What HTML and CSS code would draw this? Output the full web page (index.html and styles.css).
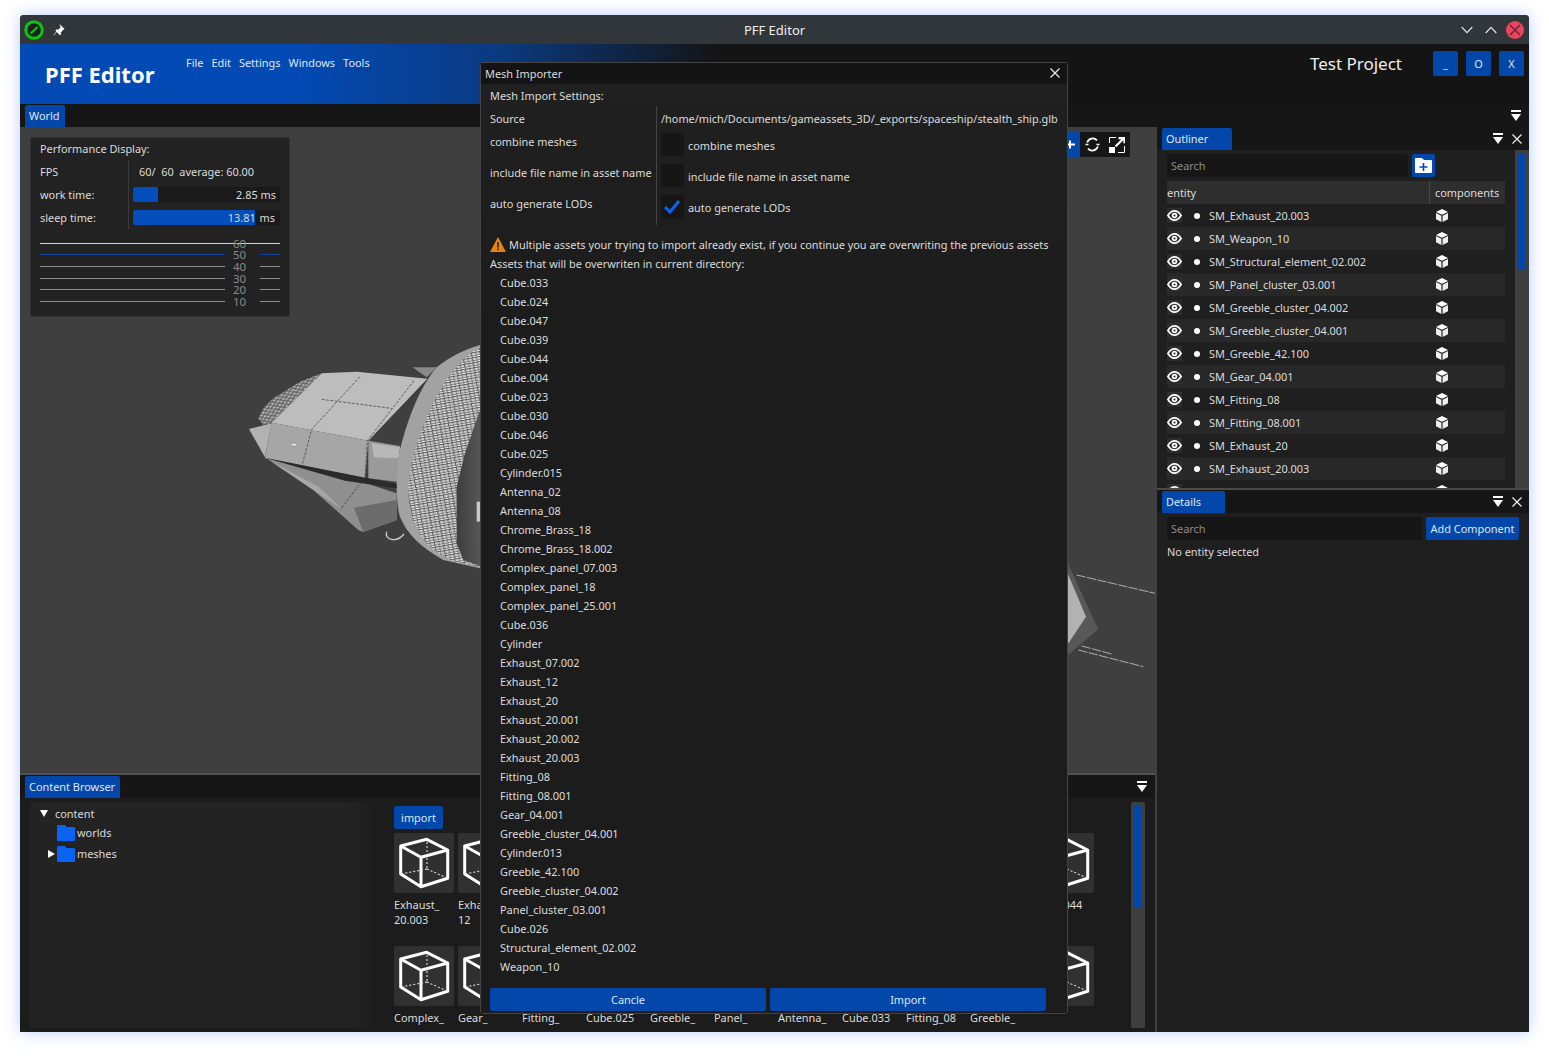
FILE: index.html
```html
<!DOCTYPE html>
<html lang="en">
<head>
<meta charset="utf-8">
<title>PFF Editor</title>
<link rel="stylesheet" href="styles.css">
</head>
<body>
<svg class="sprite" width="0" height="0">
  <symbol id="menu-ico" viewBox="0 0 12 12"><rect x="1" y="0" width="10" height="2" fill="#fff"/><path d="M1 4h10l-5 7z" fill="#fff"/></symbol>
  <symbol id="x-ico" viewBox="0 0 12 12"><path d="M1.500 1.500l9 9M10.500 1.500l-9 9" stroke="#eee" stroke-width="1.200" fill="none"/></symbol>
  <symbol id="eye" viewBox="0 0 16 12"><path d="M.8 6C3 2.600 5.400 1 8 1s5 1.600 7.200 5C13 9.400 10.600 11 8 11S3 9.400.8 6z" fill="none" stroke="#fff" stroke-width="1.800"/><circle cx="8" cy="6" r="3" fill="#fff"/><circle cx="8" cy="6" r="1.100" fill="#222"/></symbol>
  <symbol id="box" viewBox="0 0 12 13"><path d="M6 0l6 2.900-6 2.900-6-2.900z" fill="#fff"/><path d="M0 4l5.400 2.700V13L0 10.200zM12 4L6.600 6.700V13L12 10.200z" fill="#eee"/></symbol>
  <symbol id="folder" viewBox="0 0 18 16"><path d="M0 1a1 1 0 0 1 1-1h7l2 2h7a1 1 0 0 1 1 1v12a1 1 0 0 1-1 1H1a1 1 0 0 1-1-1z" fill="#0a63f2"/><path d="M9 1.200h9" stroke="#1c1c1c" stroke-width=".7"/></symbol>
  <symbol id="cube" viewBox="0 0 60 60">
    <path d="M32.700 6.300L53.700 17 27 24.300 6.700 13zM6.700 13V41L27 53.700 53.700 45.300V17M27 24.300V53.700" fill="none" stroke="#fff" stroke-width="3" stroke-linejoin="round"/>
    <path d="M33 9V36M33 36L6.700 41M33 36L53.700 45.300" fill="none" stroke="#ddd" stroke-width="1.100" stroke-dasharray="2 2"/>
  </symbol>
</svg>

<div class="window">
  <div class="titlebar">
    <div class="tb-left">
      <svg class="tb-logo" viewBox="0 0 20 20"><circle cx="10" cy="10" r="8.300" fill="#1b1f22" stroke="#0cc40c" stroke-width="3"/><path d="M6.500 13.500L13.500 7" stroke="#0cc40c" stroke-width="2.200"/></svg>
      <svg class="tb-pin" viewBox="0 0 12 12"><path d="M7 .8l4.200 4.200-1.200.6-2.400 2.800.2 1.800-1 .6-4-4 .6-1 1.800.2 2.800-2.400zM3.800 7.400L.8 11.200" fill="#fff" stroke="#fff" stroke-width=".7"/></svg>
    </div>
    <div class="tb-title">PFF Editor</div>
    <div class="tb-right">
      <svg class="tb-chev" viewBox="0 0 12 8"><path d="M.7 1L6 6.600 11.300 1" fill="none" stroke="#e8e8e8" stroke-width="1.100"/></svg>
      <svg class="tb-chev" viewBox="0 0 12 8"><path d="M.7 7L6 1.400 11.300 7" fill="none" stroke="#e8e8e8" stroke-width="1.100"/></svg>
      <svg class="tb-close" viewBox="0 0 18 18"><circle cx="9" cy="9" r="9" fill="#e9445d"/><path d="M4 4l10 10M14 4L4 14" stroke="#5a2530" stroke-width="1.200"/></svg>
    </div>
  </div>

  <header class="appbar">
    <div class="brand">PFF Editor</div>
    <nav class="menu"><span>File</span><span>Edit</span><span>Settings</span><span>Windows</span><span>Tools</span></nav>
    <div class="project">Test Project</div>
    <div class="app-btns"><button class="app-btn">_</button><button class="app-btn">O</button><button class="app-btn">X</button></div>
  </header>

  <div class="tabrow world-row">
    <div class="tab">World</div>
    <svg class="ico12 push"><use href="#menu-ico"/></svg>
  </div>

  <div class="main">
    <div class="leftcol">
      <section class="viewport">
        <svg class="scene" viewBox="20 127 1135 646">
          <defs>
            <pattern id="dots" width="26" height="15" patternUnits="userSpaceOnUse" patternTransform="rotate(-10)">
              <rect width="26" height="15" fill="#5a5a5a"/>
              <path d="M0 3h11M13 3h10M2 10h9M13 10h12" stroke="#f4f4f4" stroke-width="4"/>
            </pattern>
            <pattern id="grb" width="18" height="12" patternUnits="userSpaceOnUse" patternTransform="rotate(-25)">
              <rect width="18" height="12" fill="#6a6a6a"/>
              <path d="M0 3h8M10 8h6" stroke="#f0f0f0" stroke-width="3"/>
            </pattern>
            <linearGradient id="inner" x1="0" x2="1" y1="0" y2="0"><stop offset="0" stop-color="#3e3e3e"/><stop offset="1" stop-color="#565656"/></linearGradient>
          </defs>
          <g transform="translate(230 330) scale(.33333)">
            <path d="M620 112C570 170 530 270 505 380 495 450 500 530 510 560 530 610 570 650 640 690L750 715V45C700 60 660 80 620 112z" fill="#a2a2a2"/>
            <path d="M750 52C690 85 640 150 600 240 560 330 535 420 535 480 535 570 570 640 640 680 670 695 700 703 750 708z" fill="url(#dots)"/>
            <path d="M750 240L705 370 680 470 680 640 700 690 750 708z" fill="url(#inner)"/>
            <rect x="740" y="515" width="10" height="60" fill="#c8c8c8"/>
            <path d="M85 265L100 235 130 205 210 155 275 130 125 278 100 285z" fill="url(#grb)"/>
            <path d="M548 112H620L590 142z" fill="#8a8a8a"/>
            <path d="M275 130L380 125 592 146 415 332 125 278z" fill="#bdbdbd"/>
            <path d="M125 278L415 332 405 445 105 385z" fill="#a6a6a6"/>
            <path d="M57 297L125 280 105 382z" fill="#b2b2b2"/>
            <path d="M415 332L510 348 500 455 415 445z" fill="#9a9a9a"/>
            <path d="M425 340L510 352 505 385 432 382z" fill="#b8b8b8"/>
            <path d="M110 385L250 480 385 600 400 606 500 570 500 490 395 455z" fill="#8f8f8f"/>
            <path d="M120 392L265 470 340 540 250 480z" fill="#a8a8a8"/>
            <path d="M372 533L500 510 500 570 400 606z" fill="#6c6c6c"/>
            <path d="M105 383L500 462 500 475 345 452z" fill="#2b2b2b"/>
            <path d="M275 208L485 235M390 140L245 298 215 410M552 152L412 332 405 445M395 455L330 540" fill="none" stroke="#333" stroke-width="2" stroke-dasharray="9 4"/>
            <ellipse cx="192" cy="344" rx="10" ry="5" fill="#dadada" stroke="#555"/>
            <path d="M470 605C462 630 500 640 522 612" fill="none" stroke="#ccc" stroke-width="4"/>
          </g>
          <g transform="translate(1060 550) scale(.33333)">
            <path d="M20 32L115 238 20 318z" fill="#585858"/>
            <path d="M20 62L78 200 20 288z" fill="#b2b2b2"/>
            <path d="M50 75L285 130M65 288L155 312M55 300L250 350" stroke="#c4c4c4" stroke-width="2.500" stroke-dasharray="28 4"/>
          </g>
        </svg>

        <div class="perf">
          <div class="perf-title">Performance Display:</div>
          <div class="perf-table">
            <div class="perf-labels"><div>FPS</div><div>work time:</div><div>sleep time:</div></div>
            <div class="perf-values">
              <div class="fps">60/  60  average: 60.00</div>
              <div class="bar"><div class="bar-fill" style="width:25px"></div><span class="bar-text">2.85 ms</span></div>
              <div class="bar"><div class="bar-fill" style="width:122px"></div><span class="bar-text alt">13.81 ms</span></div>
            </div>
          </div>
          <div class="graph">
            <div class="gline top"><i></i><b>60</b><i></i></div>
            <div class="gline blue"><i></i><b>50</b><i></i></div>
            <div class="gline"><i></i><b>40</b><i></i></div>
            <div class="gline"><i></i><b>30</b><i></i></div>
            <div class="gline"><i></i><b>20</b><i></i></div>
            <div class="gline"><i></i><b>10</b><i></i></div>
          </div>
        </div>

        <div class="gizmo">
          <div class="giz-blue"><svg width="8" height="11" viewBox="0 0 8 11"><path d="M0 5.500h8M3 1.500v8" stroke="#fff" stroke-width="2"/></svg></div>
          <svg class="giz-ico" viewBox="0 0 15 15"><path d="M2.200 5.500A5.800 5.800 0 0 1 12 3.300M12.800 9.500A5.800 5.800 0 0 1 3 11.700" fill="none" stroke="#fff" stroke-width="1.700"/><path d="M.5 7.500h3M11.500 7.500h3" stroke="#fff" stroke-width="1.700"/></svg>
          <svg class="giz-ico wide" viewBox="0 0 16 16"><path d="M.5 6V.5H7M15.500 9v6.500H9" fill="none" stroke="#fff" stroke-width="1"/><rect x="0" y="10" width="6" height="6" fill="#fff"/><path d="M6.500 9.500L14 2M9.500 1.200h6v5" fill="none" stroke="#fff" stroke-width="2.200"/></svg>
        </div>
      </section>

      <div class="hsplit"></div>

      <section class="browser">
        <div class="tabrow browser-tabs">
          <div class="tab">Content Browser</div>
          <svg class="ico12 push"><use href="#menu-ico"/></svg>
        </div>
        <div class="browser-body">
          <div class="tree">
            <div class="tree-row root"><span class="tri-down"></span><span>content</span></div>
            <div class="tree-row folder-row"><svg class="folder"><use href="#folder"/></svg><span>worlds</span></div>
            <div class="tree-row folder-row"><span class="tri-right"></span><svg class="folder"><use href="#folder"/></svg><span>meshes</span></div>
          </div>
          <div class="assets">
            <button class="btn import-btn">import</button>
            <div class="asset-grid">
              <div class="asset"><svg class="thumb"><use href="#cube"/></svg><div>Exhaust_<br>20.003</div></div>
              <div class="asset"><svg class="thumb"><use href="#cube"/></svg><div>Exhaust_<br>12</div></div>
              <div class="asset"><svg class="thumb"><use href="#cube"/></svg><div>Exhaust_<br>20</div></div>
              <div class="asset"><svg class="thumb"><use href="#cube"/></svg><div>Cube.030</div></div>
              <div class="asset"><svg class="thumb"><use href="#cube"/></svg><div>Cube.004</div></div>
              <div class="asset"><svg class="thumb"><use href="#cube"/></svg><div>Cube.023</div></div>
              <div class="asset"><svg class="thumb"><use href="#cube"/></svg><div>Cube.046</div></div>
              <div class="asset"><svg class="thumb"><use href="#cube"/></svg><div>Cube.025</div></div>
              <div class="asset"><svg class="thumb"><use href="#cube"/></svg><div>Cube.036</div></div>
              <div class="asset"><svg class="thumb"><use href="#cube"/></svg><div>Cube.039</div></div>
              <div class="asset"><svg class="thumb"><use href="#cube"/></svg><div>Cube.044</div></div>
              <div class="asset"><svg class="thumb"><use href="#cube"/></svg><div>Complex_</div></div>
              <div class="asset"><svg class="thumb"><use href="#cube"/></svg><div>Gear_</div></div>
              <div class="asset"><svg class="thumb"><use href="#cube"/></svg><div>Fitting_</div></div>
              <div class="asset"><svg class="thumb"><use href="#cube"/></svg><div>Cube.025</div></div>
              <div class="asset"><svg class="thumb"><use href="#cube"/></svg><div>Greeble_</div></div>
              <div class="asset"><svg class="thumb"><use href="#cube"/></svg><div>Panel_</div></div>
              <div class="asset"><svg class="thumb"><use href="#cube"/></svg><div>Antenna_</div></div>
              <div class="asset"><svg class="thumb"><use href="#cube"/></svg><div>Cube.033</div></div>
              <div class="asset"><svg class="thumb"><use href="#cube"/></svg><div>Fitting_08</div></div>
              <div class="asset"><svg class="thumb"><use href="#cube"/></svg><div>Greeble_</div></div>
              <div class="asset"><svg class="thumb"><use href="#cube"/></svg><div></div></div>
            </div>
          </div>
          <div class="vscroll"><div class="vthumb"></div></div>
        </div>
      </section>
    </div>

    <div class="vsplit"></div>

    <div class="rightcol">
      <section class="outliner">
        <div class="tabrow side-tabs">
          <div class="tab outliner-tab">Outliner</div>
          <svg class="ico12 push"><use href="#menu-ico"/></svg>
          <svg class="ico12"><use href="#x-ico"/></svg>
        </div>
        <div class="outliner-body">
          <div class="outliner-main">
            <div class="search-row">
              <div class="search grow">Search</div>
              <button class="btn add-folder"><svg width="17" height="15" viewBox="0 0 17 15"><path d="M0 1a1 1 0 0 1 1-1h6l2 2h7a1 1 0 0 1 1 1v11a1 1 0 0 1-1 1H1a1 1 0 0 1-1-1z" fill="#fff"/><path d="M8.500 5v8M4.500 9h8" stroke="#0347ab" stroke-width="1.600"/></svg></button>
            </div>
            <div class="ent-head"><div class="col-a">entity</div><div class="col-b">components</div></div>
            <div class="ent-row"><svg class="eye"><use href="#eye"/></svg><i class="dot"></i><span class="ent-name">SM_Exhaust_20.003</span><svg class="box"><use href="#box"/></svg></div>
            <div class="ent-row"><svg class="eye"><use href="#eye"/></svg><i class="dot"></i><span class="ent-name">SM_Weapon_10</span><svg class="box"><use href="#box"/></svg></div>
            <div class="ent-row"><svg class="eye"><use href="#eye"/></svg><i class="dot"></i><span class="ent-name">SM_Structural_element_02.002</span><svg class="box"><use href="#box"/></svg></div>
            <div class="ent-row"><svg class="eye"><use href="#eye"/></svg><i class="dot"></i><span class="ent-name">SM_Panel_cluster_03.001</span><svg class="box"><use href="#box"/></svg></div>
            <div class="ent-row"><svg class="eye"><use href="#eye"/></svg><i class="dot"></i><span class="ent-name">SM_Greeble_cluster_04.002</span><svg class="box"><use href="#box"/></svg></div>
            <div class="ent-row"><svg class="eye"><use href="#eye"/></svg><i class="dot"></i><span class="ent-name">SM_Greeble_cluster_04.001</span><svg class="box"><use href="#box"/></svg></div>
            <div class="ent-row"><svg class="eye"><use href="#eye"/></svg><i class="dot"></i><span class="ent-name">SM_Greeble_42.100</span><svg class="box"><use href="#box"/></svg></div>
            <div class="ent-row"><svg class="eye"><use href="#eye"/></svg><i class="dot"></i><span class="ent-name">SM_Gear_04.001</span><svg class="box"><use href="#box"/></svg></div>
            <div class="ent-row"><svg class="eye"><use href="#eye"/></svg><i class="dot"></i><span class="ent-name">SM_Fitting_08</span><svg class="box"><use href="#box"/></svg></div>
            <div class="ent-row"><svg class="eye"><use href="#eye"/></svg><i class="dot"></i><span class="ent-name">SM_Fitting_08.001</span><svg class="box"><use href="#box"/></svg></div>
            <div class="ent-row"><svg class="eye"><use href="#eye"/></svg><i class="dot"></i><span class="ent-name">SM_Exhaust_20</span><svg class="box"><use href="#box"/></svg></div>
            <div class="ent-row"><svg class="eye"><use href="#eye"/></svg><i class="dot"></i><span class="ent-name">SM_Exhaust_20.003</span><svg class="box"><use href="#box"/></svg></div>
            <div class="ent-row last-row"><svg class="eye"><use href="#eye"/></svg><i class="dot"></i><svg class="box"><use href="#box"/></svg></div>
          </div>
          <div class="side-scroll"><div class="side-thumb"></div></div>
        </div>
      </section>

      <div class="hsplit right"></div>

      <section class="details">
        <div class="tabrow side-tabs">
          <div class="tab details-tab">Details</div>
          <svg class="ico12 push"><use href="#menu-ico"/></svg>
          <svg class="ico12"><use href="#x-ico"/></svg>
        </div>
        <div class="details-body">
          <div class="search-row">
            <div class="search grow">Search</div>
            <button class="btn add-comp">Add Component</button>
          </div>
          <div class="no-sel">No entity selected</div>
        </div>
      </section>
    </div>
  </div>

  <div class="dialog">
    <div class="dlg-title"><span>Mesh Importer</span><svg class="ico12 dlg-x"><use href="#x-ico"/></svg></div>
    <div class="dlg-body">
      <div class="dlg-line">Mesh Import Settings:</div>
      <div class="settings">
        <div class="s-label src">Source</div>
        <div class="s-value src">/home/mich/Documents/gameassets_3D/_exports/spaceship/stealth_ship.glb</div>
        <div class="s-label">combine meshes</div>
        <div class="s-value"><span class="check"></span>combine meshes</div>
        <div class="s-label">include file name in asset name</div>
        <div class="s-value"><span class="check"></span>include file name in asset name</div>
        <div class="s-label">auto generate LODs</div>
        <div class="s-value"><span class="check"><svg width="23" height="23" viewBox="0 0 23 23"><path d="M4 12l5 5 9-11" fill="none" stroke="#0a63f2" stroke-width="3"/></svg></span>auto generate LODs</div>
      </div>
      <div class="dlg-line warn"><svg class="warn-ico" viewBox="0 0 16 15"><path d="M8 0l8 15H0z" fill="#e8830c"/><path d="M8 5v5.500M8 11.600v1.600" stroke="#1a1a1a" stroke-width="1.500"/></svg>Multiple assets your trying to import already exist, if you continue you are overwriting the previous assets</div>
      <div class="dlg-line">Assets that will be overwriten in current directory:</div>
      <ul class="asset-list">
        <li>Cube.033</li><li>Cube.024</li><li>Cube.047</li><li>Cube.039</li><li>Cube.044</li><li>Cube.004</li><li>Cube.023</li><li>Cube.030</li><li>Cube.046</li><li>Cube.025</li>
        <li>Cylinder.015</li><li>Antenna_02</li><li>Antenna_08</li><li>Chrome_Brass_18</li><li>Chrome_Brass_18.002</li><li>Complex_panel_07.003</li><li>Complex_panel_18</li><li>Complex_panel_25.001</li><li>Cube.036</li><li>Cylinder</li>
        <li>Exhaust_07.002</li><li>Exhaust_12</li><li>Exhaust_20</li><li>Exhaust_20.001</li><li>Exhaust_20.002</li><li>Exhaust_20.003</li><li>Fitting_08</li><li>Fitting_08.001</li><li>Gear_04.001</li><li>Greeble_cluster_04.001</li>
        <li>Cylinder.013</li><li>Greeble_42.100</li><li>Greeble_cluster_04.002</li><li>Panel_cluster_03.001</li><li>Cube.026</li><li>Structural_element_02.002</li><li>Weapon_10</li>
      </ul>
      <div class="dlg-actions"><button class="btn dlg-btn">Cancle</button><button class="btn dlg-btn">Import</button></div>
    </div>
  </div>
</div>
</body>
</html>
```

FILE: styles.css
```css
* { box-sizing: border-box; }
html, body { margin: 0; padding: 0; height: 100%; overflow: hidden; }
body { background: #fff; font-family: "Noto Sans", sans-serif; font-size: 10.920px; color: #dcdcdc; }
.sprite { position: absolute; }
button { font: inherit; border: 0; padding: 0; color: #dfe6f2; }

.window { position: relative; margin: 15px 0 0 20px; width: 1509px; height: 1017px; display: flex; flex-direction: column; background: #161616; border-radius: 4px 4px 0 0; box-shadow: 0 0 16px rgba(70,130,255,.38); overflow: hidden; }

.titlebar { height: 29px; flex: none; display: grid; grid-template-columns: 1fr auto 1fr; align-items: center; background: #31363b; font-size: 13px; color: #eff0f1; }
.tb-left { display: flex; align-items: center; padding-left: 4px; gap: 9px; }
.tb-logo { width: 20px; height: 20px; }
.tb-pin { width: 12px; height: 12px; }
.tb-right { display: flex; align-items: center; justify-content: flex-end; gap: 12px; padding-right: 5px; }
.tb-chev { width: 12px; height: 8px; }
.tb-close { width: 18px; height: 18px; margin-left: -3px; }

.appbar { height: 60px; flex: none; display: flex; background: linear-gradient(90deg, #034ab5 0, #034ab5 270px, #0a3a80 480px, #141414 700px); }
.brand { font-size: 22px; font-weight: 700; color: #fff; padding: 14px 0 0 25px; width: 166px; line-height: 32px; }
.menu { display: flex; gap: 8px; padding-top: 10px; line-height: 18px; color: #dfe8f7; }
.project { margin-left: auto; font-size: 17px; line-height: 24px; padding-top: 8px; color: #eee; }
.app-btns { display: flex; gap: 8px; margin: 7px 5px 0 31px; }
.app-btn { width: 25px; height: 25px; background: #0347ab; border-radius: 2px; }

.tabrow { height: 23px; flex: none; display: flex; align-items: flex-end; background: #161616; }
.world-row { padding-left: 5px; padding-right: 7px; }
.tab { height: 22px; line-height: 22px; padding: 0 5px 0 4px; background: #0347ab; border-radius: 2px 2px 0 0; color: #dfe8f7; }
.ico12 { width: 12px; height: 12px; margin-bottom: 5px; flex: none; }
.push { margin-left: auto; }

.main { flex: 1; min-height: 0; display: flex; }
.leftcol { width: 1135px; flex: none; display: flex; flex-direction: column; }
.vsplit { width: 2px; background: #3f3f3f; flex: none; }
.rightcol { flex: 1; display: flex; flex-direction: column; min-width: 0; }

.viewport { height: 646px; flex: none; background: #3f3f3f; position: relative; overflow: hidden; }
.scene { position: absolute; inset: 0; width: 1135px; height: 646px; }
.hsplit { height: 2px; flex: none; background: #525252; }
.hsplit.right { background: #4a4a4a; }

.perf { position: absolute; left: 10px; top: 10px; width: 260px; height: 180px; background: #222; border: 1px solid #333; border-radius: 2px; padding: 0 9px; line-height: 23px; }
.perf-title { line-height: 22px; }
.perf-table { display: flex; height: 69px; }
.perf-labels { width: 89px; border-right: 1px solid #3a3a3a; }
.perf-values { flex: 1; padding-left: 4px; }
.fps { white-space: pre; padding-left: 6px; }
.bar { position: relative; height: 15px; margin: 4px 0 8px; background: #1a1a1a; border-radius: 2px; overflow: hidden; line-height: 15px; text-align: right; padding-right: 4px; }
.bar-fill { position: absolute; left: 0; top: 0; bottom: 0; background: #034dbd; }
.bar-text { position: relative; }
.bar-text.alt { padding-right: 1px; word-spacing: 1px; }
.graph { margin-top: 8.600px; }
.gline { display: flex; align-items: center; height: 11.600px; color: #8a8a8a; }
.gline i { height: 1px; background: #8e8e8e; flex: 1; }
.gline i:last-child { flex: none; width: 20px; }
.gline b { width: 35px; padding-left: 8px; font-weight: 400; line-height: 11px; font-size: 11.500px; position: relative; }
.gline.top i { background: #d2d2d2; }
.gline.top { background: linear-gradient(#d2d2d2, #d2d2d2) center / 100% 1px no-repeat; }
.gline.blue i { background: #0f429c; }

.gizmo { position: absolute; left: 1047px; top: 5px; height: 25px; width: 63px; display: flex; align-items: center; background: #161616; }
.giz-blue { width: 13px; height: 25px; background: #0347ab; display: flex; align-items: center; flex: none; }
.giz-ico { width: 15px; height: 15px; margin-left: 5px; flex: none; }
.giz-ico.wide { width: 16px; height: 16px; margin-left: 9px; }

.browser { flex: 1; min-height: 0; display: flex; flex-direction: column; background: #1c1c1c; }
.browser-tabs { padding: 0 7px 0 5px; }
.browser-body { flex: 1; min-height: 0; display: flex; padding: 4px 10px 4px 10px; }
.tree { width: 350px; flex: none; background: linear-gradient(90deg, #232323 0, #232323 320px, #1b1b1b 350px); padding-top: 2px; border-radius: 2px; }
.tree-row { display: flex; align-items: center; position: relative; line-height: 19px; }
.root { padding-left: 10px; height: 18px; gap: 7px; }
.tri-down { width: 0; height: 0; border: 4px solid transparent; border-top: 7px solid #fff; border-bottom: 0; }
.tri-right { position: absolute; left: 18px; width: 0; height: 0; border: 4px solid transparent; border-left: 7px solid #fff; border-right: 0; }
.folder-row { padding-left: 27px; height: 21px; gap: 2px; }
.folder { width: 18px; height: 16px; }
.assets { width: 737px; flex: none; margin-left: 14px; overflow: hidden; padding-top: 4px; }
.btn { background: #0347ab; border-radius: 2px; color: #dfe8f7; display: block; }
.import-btn { width: 49px; height: 23px; }
.asset-grid { display: grid; grid-template-columns: repeat(11, 60px); column-gap: 4px; row-gap: 4px; grid-auto-rows: 109px; margin-top: 4px; }
.asset { line-height: 15px; white-space: nowrap; }
.thumb { display: block; width: 60px; height: 60px; background: #303030; border-radius: 2px; margin-bottom: 4px; }
.vscroll { width: 14px; flex: none; background: #3f3f3f; border-radius: 2px; padding: 3px; }
.vthumb { height: 103px; background: #0347ab; border-radius: 2px; }

.side-tabs { padding: 0 6px 0 5px; gap: 7px; }
.outliner { height: 361px; flex: none; display: flex; flex-direction: column; }
.outliner-tab { width: 70px; }
.outliner-body { flex: 1; min-height: 0; display: flex; background: #1f1f1f; }
.outliner-main { width: 358px; flex: none; padding: 4px 10px 0; overflow: hidden; }
.search-row { display: flex; gap: 4px; height: 23px; margin-bottom: 4px; }
.search { background: #161616; border-radius: 2px; color: #8c8c8c; line-height: 23px; padding-left: 4px; }
.grow { flex: 1; }
.add-folder { width: 23px; height: 23px; display: flex; align-items: center; justify-content: center; margin-right: 70px; }
.ent-head { display: flex; height: 23px; line-height: 23px; background: #2e2e2e; }
.col-a { width: 263px; border-right: 1px solid #4a4a4a; }
.col-b { padding-left: 5px; }
.ent-row { display: flex; align-items: center; height: 23px; }
.ent-row:nth-child(even) { background: #282828; }
.eye { width: 15px; height: 15px; padding: 2px 0; background: #2d2d2d; flex: none; }
.dot { width: 6px; height: 6px; background: #fff; border-radius: 50%; margin-left: 12px; flex: none; }
.ent-name { margin-left: 9px; width: 227px; flex: none; white-space: nowrap; }
.last-row .box { margin-left: 236px; }
.box { width: 12px; height: 13px; flex: none; }
.side-scroll { width: 14px; background: #3f3f3f; padding: 3px 3px 0 2px; flex: none; }
.side-thumb { height: 117px; background: #0347ab; border-radius: 2px; }

.details { flex: 1; display: flex; flex-direction: column; background: #1f1f1f; }
.details-tab { width: 63px; }
.details-body { padding: 4px 10px; }
.add-comp { width: 93px; height: 23px; }
.no-sel { line-height: 19px; margin-top: -2px; }

.dialog { position: absolute; left: 460px; top: 47px; width: 588px; height: 952px; background: #1d1d1d; border: 1px solid #444; border-radius: 3px; display: flex; flex-direction: column; z-index: 5; }
.dlg-title { height: 21px; flex: none; background: #141414; display: flex; align-items: center; justify-content: space-between; padding: 0 6px 1px 4px; }
.dlg-x { margin: 0; }
.dlg-body { padding: 2px 9px 0; flex: 1; background: linear-gradient(#202020, #1c1c1c 240px); }
.dlg-line { line-height: 19px; white-space: nowrap; }
.settings { display: grid; grid-template-columns: 167px 1fr; grid-template-rows: 23px 28px 28px 28px; row-gap: 3px; margin: 1px 0 13px; }
.s-label { border-right: 1px solid #444; line-height: 19px; margin-bottom: -3px; white-space: nowrap; }
.s-label.src { line-height: 23px; padding-top: 1px; }
.s-value { padding-left: 4px; display: flex; align-items: flex-start; line-height: 25px; white-space: nowrap; padding-top: 1px; }
.s-value.src { line-height: 23px; }
.check { width: 23px; height: 23px; background: #161616; border-radius: 2px; margin-right: 4px; display: block; flex: none; }
.warn { display: flex; align-items: center; }
.warn-ico { width: 16px; height: 15px; margin-right: 3px; flex: none; }
.asset-list { list-style: none; margin: 0; padding: 0 0 0 10px; line-height: 19px; }
.dlg-actions { display: flex; gap: 4px; margin-top: 12px; }
.dlg-btn { width: 276px; height: 23px; }
```
